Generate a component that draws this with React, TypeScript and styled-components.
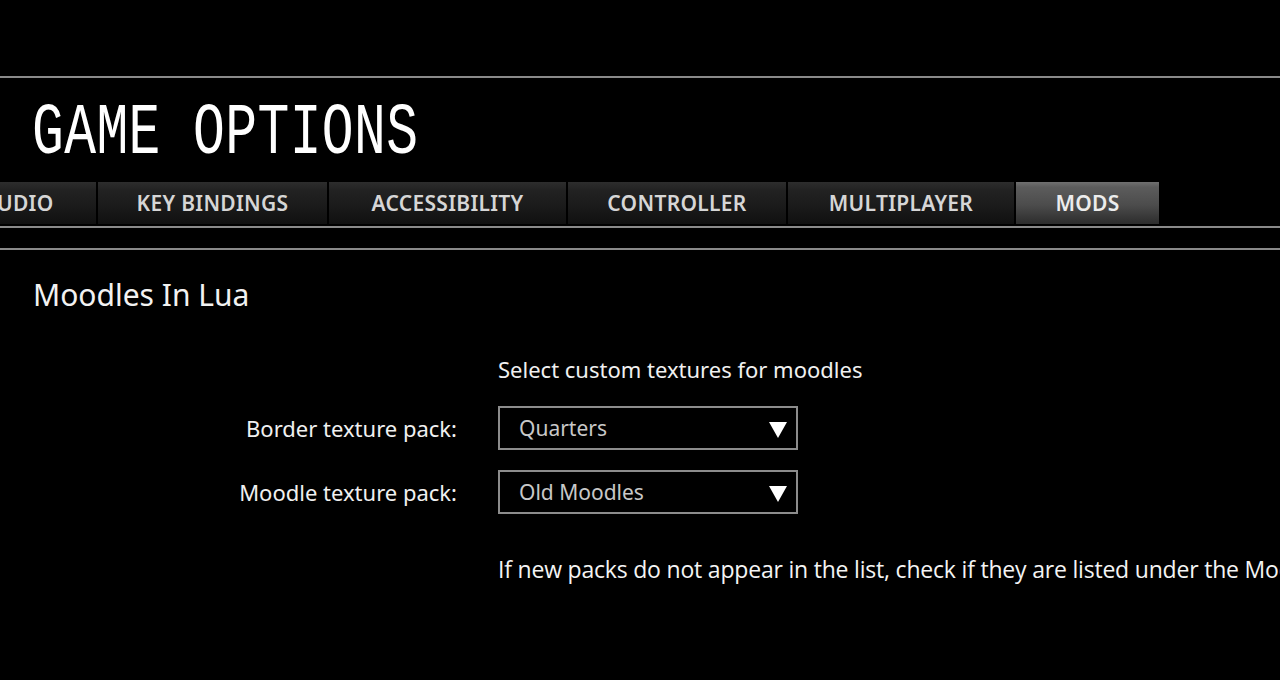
import React from 'react'
import styled, { createGlobalStyle } from 'styled-components'

const GlobalStyle = createGlobalStyle`
  html, body {
    margin: 0;
    padding: 0;
    background: #000;
    overflow: hidden;
  }
  body {
    font-family: "Noto Sans", "Open Sans", sans-serif;
    color: #fff;
  }
`

const Screen = styled.div`
  width: 1280px;
  height: 680px;
  background: #000;
  overflow: hidden;
  padding-top: 76px;
  box-sizing: border-box;
`

const Rule = styled.div<{ $gap?: number }>`
  height: 2px;
  background: #8a8a8a;
  margin-top: ${p => p.$gap ?? 0}px;
`

const Header = styled.div`
  height: 104px;
  display: flex;
  align-items: center;
  padding-left: 32px;
`

const Title = styled.h1`
  margin: 0;
  font-family: "Courier New", "Nimbus Mono PS", "FreeMono", "Liberation Mono", monospace;
  font-weight: 400;
  font-size: 53px;
  letter-spacing: 0.4px;
  line-height: 1;
  color: #fff;
  transform: scaleY(1.36);
  transform-origin: center;
  margin-top: 8px;
`

const TabBar = styled.div`
  display: flex;
  gap: 2px;
  margin-left: -60px;
  height: 42px;
`

const Tab = styled.div<{ $width: number, $active?: boolean }>`
  flex: 0 0 ${p => p.$width}px;
  display: flex;
  align-items: center;
  justify-content: center;
  font-family: "Noto Sans", sans-serif;
  font-size: 21px;
  font-weight: 600;
  letter-spacing: 0.3px;
  color: ${p => (p.$active ? '#ececec' : '#d6d6d6')};
  background: ${p => (p.$active
    ? 'linear-gradient(#707070 0, #5c5c5c 12%, #4c4c4c 55%, #2c2c2c 100%)'
    : 'linear-gradient(#2d2d2d 0, #222 20%, #1a1a1a 60%, #101010 100%)')};
`

const Content = styled.div`
  padding-left: 33px;
`

const SectionTitle = styled.h2`
  margin: 0;
  margin-top: 25px;
  font-family: "Noto Sans", sans-serif;
  font-weight: 400;
  font-size: 30px;
  line-height: 40px;
  color: #f2f2f2;
`

const Form = styled.div`
  display: grid;
  grid-template-columns: 424px 300px;
  column-gap: 41px;
  row-gap: 20px;
  align-items: center;
  margin-top: 39px;
`

const Hint = styled.div`
  grid-column: 2;
  font-size: 22px;
  line-height: 30px;
  color: #f0f0f0;
  white-space: nowrap;
  margin-bottom: 2px;
`

const Label = styled.div`
  grid-column: 1;
  text-align: right;
  font-size: 22px;
  color: #f0f0f0;
  white-space: nowrap;
`

const Select = styled.div`
  grid-column: 2;
  height: 44px;
  box-sizing: border-box;
  border: 2px solid #8c8c8c;
  display: flex;
  align-items: center;
  justify-content: space-between;
  padding: 0 8px 0 19px;
  font-size: 21px;
  color: #c8c8c8;
`

const Arrow = styled.svg`
  width: 20px;
  height: 18px;
  margin-top: 4px;
`

const Note = styled.div`
  grid-column: 2;
  margin-top: 20px;
  font-family: "Open Sans", "Noto Sans", sans-serif;
  font-size: 23px;
  line-height: 30px;
  letter-spacing: -0.2px;
  color: #f4f4f4;
  white-space: nowrap;
`

const tabs = [
  { label: 'AUDIO', width: 156 },
  { label: 'KEY BINDINGS', width: 229 },
  { label: 'ACCESSIBILITY', width: 237 },
  { label: 'CONTROLLER', width: 218 },
  { label: 'MULTIPLAYER', width: 226 },
  { label: 'MODS', width: 143, active: true }
]

const DropArrow = () => (
  <Arrow viewBox="0 0 20 18">
    <polygon points="1,1 19,1 10,17" fill="#fff" />
  </Arrow>
)

export default function App () {
  return (
    <Screen>
      <GlobalStyle />
      <Rule />
      <Header>
        <Title>GAME OPTIONS</Title>
      </Header>
      <TabBar>
        {tabs.map(t => (
          <Tab key={t.label} $width={t.width} $active={t.active}>{t.label}</Tab>
        ))}
      </TabBar>
      <Rule $gap={2} />
      <Rule $gap={20} />
      <Content>
        <SectionTitle>Moodles In Lua</SectionTitle>
        <Form>
          <Hint>Select custom textures for moodles</Hint>
          <Label>Border texture pack:</Label>
          <Select>
            <span>Quarters</span>
            <DropArrow />
          </Select>
          <Label>Moodle texture pack:</Label>
          <Select>
            <span>Old Moodles</span>
            <DropArrow />
          </Select>
          <Note>If new packs do not appear in the list, check if they are listed under the Mods section.</Note>
        </Form>
      </Content>
    </Screen>
  )
}
